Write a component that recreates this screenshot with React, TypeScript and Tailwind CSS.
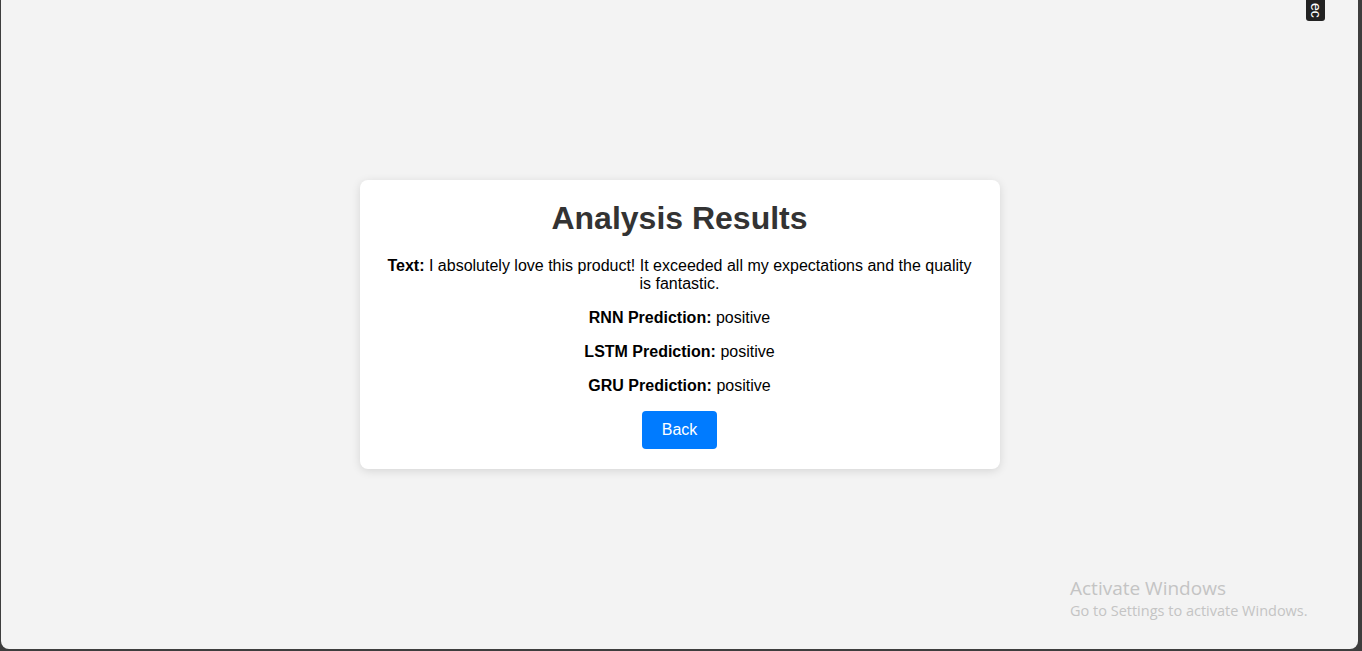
import React from "react";

const predictions = [
  { model: "RNN", label: "positive" },
  { model: "LSTM", label: "positive" },
  { model: "GRU", label: "positive" },
];

const App: React.FC = () => {
  return (
    <div className="h-screen w-full bg-[#3d3d3d] flex" style={{ fontFamily: '"Liberation Sans", Arial, sans-serif' }}>
      <div className="relative flex-1 ml-px mr-[4px] mb-[2px] bg-[#f3f3f3] rounded-bl-[8px] rounded-br-[8px] flex items-center justify-center">
        {/* Results card */}
        <div className="w-[640px] bg-white rounded-[8px] shadow-[0_2px_10px_rgba(0,0,0,0.12)] p-5 text-center">
          <h1 className="text-[32px] leading-[37px] font-bold text-[#333] mb-5">Analysis Results</h1>
          <p className="text-[16px] leading-[18px] text-black">
            <strong>Text:</strong> I absolutely love this product! It exceeded all my expectations and the quality is fantastic.
          </p>
          {predictions.map((p) => (
            <p key={p.model} className="text-[16px] leading-[18px] text-black mt-4">
              <strong>{p.model} Prediction:</strong> {p.label}
            </p>
          ))}
          <button className="mt-4 bg-[#007bff] text-white text-[16px] leading-[18px] px-5 py-[10px] rounded-[4px]">
            Back
          </button>
        </div>

        {/* extension tab */}
        <div className="absolute top-0 right-[33px] w-[19px] h-[21px] bg-[#222] rounded-b-[3px] flex items-center justify-center">
          <span className="text-white text-[14px] leading-none [writing-mode:vertical-rl]">ec</span>
        </div>

        {/* watermark */}
        <div
          className="absolute left-[1069px] top-[576px] text-[#c4c4c4]"
          style={{ fontFamily: '"Open Sans", "Noto Sans", sans-serif' }}
        >
          <div className="text-[19px] leading-[24px]">Activate Windows</div>
          <div className="text-[14.5px] leading-[21px]">Go to Settings to activate Windows.</div>
        </div>
      </div>
    </div>
  );
};

export default App;
